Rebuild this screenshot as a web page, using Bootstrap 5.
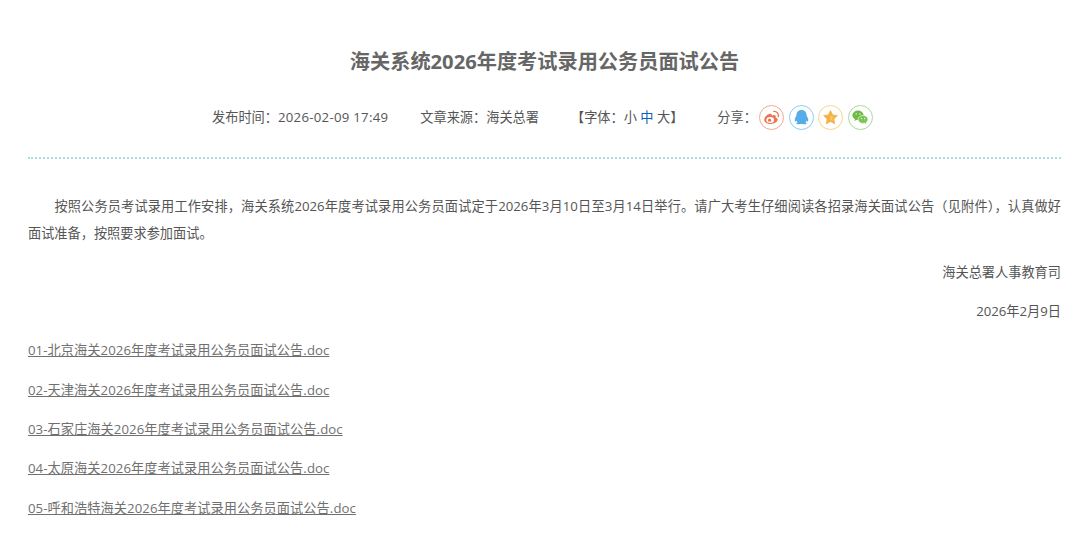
<!DOCTYPE html>
<html lang="zh-CN">
<head>
<meta charset="utf-8">
<title>海关系统2026年度考试录用公务员面试公告</title>
<link href="https://cdn.jsdelivr.net/npm/bootstrap@5.3.0/dist/css/bootstrap.min.css" rel="stylesheet">
<style>
body{background:#fff;color:#555;font-family:"Open Sans","Noto Sans CJK SC",sans-serif;font-size:13.2px;overflow:hidden}
.pg-wrap{padding:0 19px 0 28px}
.pg-title{font-size:20.2px;font-weight:700;color:#666;line-height:28px;margin:0;padding-top:47px;text-align:center}
.pg-meta{height:30px;margin-top:27px;padding-right:4px;color:#555}
.pg-meta>span{padding-top:2px}
.pg-date{letter-spacing:.28px}
.pg-meta .gap-a{margin-left:32px}
.pg-meta .gap-b{margin-left:32px}
.pg-meta .gap-c{margin-left:34px}
.pg-meta .pg-cur{color:#0a62b8}
.pg-icons{gap:4.7px;margin-left:2px}
.pg-ico{width:25px;height:25px;display:block}
.pg-rule{border-top:2px dotted #a6e0e6;margin-top:25px;margin-bottom:0}
.pg-body{padding-top:33.5px}
.pg-body p{margin:0 0 12.3px;line-height:27px}
.pg-body .pg-indent{text-indent:2em;text-align:justify}
.pg-body a{color:#707070;text-decoration:underline;letter-spacing:.07px}
</style>
</head>
<body>
<div class="pg-wrap">
<h1 class="pg-title">海关系统2026年度考试录用公务员面试公告</h1>
<div class="pg-meta d-flex align-items-center justify-content-center">
<span>发布时间：<span class="pg-date">2026-02-09 17:49</span></span>
<span class="gap-a">文章来源：海关总署</span>
<span class="gap-b">【字体：小 <span class="pg-cur">中</span> 大】</span>
<span class="gap-c">分享：</span>
<div class="pg-icons d-flex">
<svg class="pg-ico" viewBox="0 0 25 25"><circle cx="12.500" cy="12.500" r="12" fill="#fff" stroke="#f3a78e"/><path d="M10.500 8.800c-3 1.200-5.300 3.600-5.300 5.900 0 2.600 3.100 4.300 6.500 4.300 4 0 7-2.200 7-4.400 0-1.400-1.300-1.900-2.100-2.200.4-1.200.1-2.200-1.200-2.300-1 0-2 .5-2.400.7.2-1.500-.9-2.600-2.500-2z" fill="#ee7350"/><ellipse cx="11.200" cy="15" rx="3.900" ry="2.900" fill="#fff"/><circle cx="10.600" cy="15.200" r="1.600" fill="#ee7350"/><path d="M14.800 6.400a4.200 4.200 0 0 1 4.500 5.200" fill="none" stroke="#ee7350" stroke-width="1.300" stroke-linecap="round"/></svg>
<svg class="pg-ico" viewBox="0 0 25 25"><circle cx="12.500" cy="12.500" r="12" fill="#fff" stroke="#8fcbf0"/><path d="M12.500 5c3.300 0 5 2.200 5 4.800 0 1.100 1 2.200 1.500 3.800.5 1.500.2 2.900-.3 2.900-.4 0-.8-.5-1.100-1.100-.2 1-.6 1.700-1.100 2.200.8.300 1.200.6 1.200 1 0 .6-1.700.9-3.100.6-1.400-.2-2.800-.2-4.200 0-1.400.3-3.100 0-3.100-.6 0-.4.400-.7 1.200-1-.5-.5-.9-1.200-1.100-2.200-.3.600-.7 1.100-1.100 1.100-.5 0-.8-1.400-.3-2.900.5-1.600 1.500-2.700 1.500-3.800 0-2.600 1.700-4.800 5-4.800z" fill="#55aee8"/></svg>
<svg class="pg-ico" viewBox="0 0 25 25"><circle cx="12.500" cy="12.500" r="12" fill="#fff" stroke="#f8d48e"/><path d="M12.500 5.600l2.100 4.300 4.800.7-3.500 3.400.8 4.800-4.200-2.300-4.200 2.300.8-4.800-3.500-3.400 4.800-.7z" fill="#f4b246" stroke="#f4b246" stroke-width=".8" stroke-linejoin="round"/><path d="M12.500 9.500l1 2.100 2.300.3-1.700 1.600.4 2.300-2-1.100z" fill="#f9cc73"/></svg>
<svg class="pg-ico" viewBox="0 0 25 25"><circle cx="12.500" cy="12.500" r="12" fill="#fff" stroke="#aad89a"/><ellipse cx="10" cy="10.300" rx="5.600" ry="4.700" fill="#6dbb45"/><path d="M7.200 13.500l-.7 2.600 3-1.600z" fill="#6dbb45"/><ellipse cx="15" cy="14.400" rx="4.900" ry="4" fill="#7cc456" stroke="#fff" stroke-width=".6"/><path d="M16.900 17.500l1.300 1.700-.1-2.300z" fill="#7cc456"/><circle cx="8.200" cy="8.900" r=".7" fill="#fff"/><circle cx="11.800" cy="8.900" r=".7" fill="#fff"/><circle cx="13.400" cy="13.600" r=".6" fill="#fff"/><circle cx="16.600" cy="13.600" r=".6" fill="#fff"/></svg>
</div>
</div>
<hr class="pg-rule opacity-100">
<div class="pg-body">
<p class="pg-indent">按照公务员考试录用工作安排，海关系统2026年度考试录用公务员面试定于2026年3月10日至3月14日举行。请广大考生仔细阅读各招录海关面试公告（见附件），认真做好面试准备，按照要求参加面试。</p>
<p class="text-end">海关总署人事教育司</p>
<p class="text-end">2026年2月9日</p>
<p><a href="#">01-北京海关2026年度考试录用公务员面试公告.doc</a></p>
<p><a href="#">02-天津海关2026年度考试录用公务员面试公告.doc</a></p>
<p><a href="#">03-石家庄海关2026年度考试录用公务员面试公告.doc</a></p>
<p><a href="#">04-太原海关2026年度考试录用公务员面试公告.doc</a></p>
<p><a href="#">05-呼和浩特海关2026年度考试录用公务员面试公告.doc</a></p>
</div>
</div>
<script src="https://cdn.jsdelivr.net/npm/bootstrap@5.3.0/dist/js/bootstrap.bundle.min.js"></script>
</body>
</html>
